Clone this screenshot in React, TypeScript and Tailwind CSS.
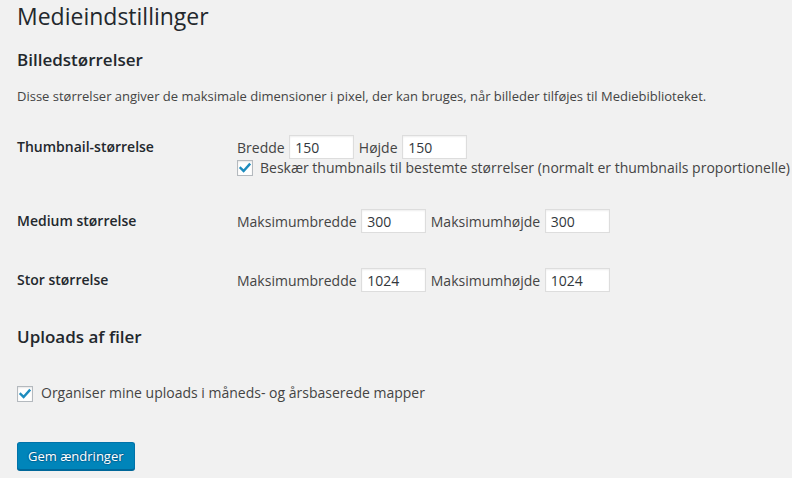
import React from 'react';

// Media settings screen (WordPress admin look)

function Checkbox({ className }: { className?: string }) {
  return (
    <span
      className={`flex h-4 w-4 shrink-0 items-center justify-center border border-[#b4b9be] bg-white shadow-[inset_0_1px_2px_rgba(0,0,0,0.1)] ${className ?? ''}`}
    >
      <svg viewBox="0 0 16 16" className="block h-4 w-4">
        <path
          d="M3 8 L6.4 11.4 L13 4"
          fill="none"
          stroke="#1e8cbe"
          strokeWidth="2.8"
          strokeLinecap="square"
        />
      </svg>
    </span>
  );
}

function NumInput({ value }: { value: string }) {
  return (
    <input
      type="text"
      defaultValue={value}
      className="mx-px h-6 w-[65px] border border-[#ddd] bg-white px-[5px] text-[14px] leading-[18px] text-[#32373c] shadow-[inset_0_1px_2px_rgba(0,0,0,0.07)] outline-none"
    />
  );
}

function SizeRow({
  label,
  wLabel,
  hLabel,
  w,
  h,
  className,
  children,
}: {
  label: string;
  wLabel: string;
  hLabel: string;
  w: string;
  h: string;
  className?: string;
  children?: React.ReactNode;
}) {
  return (
    <div className={`flex ${className ?? ''}`}>
      <div className="w-[220px] shrink-0 text-[14px] font-semibold leading-6 text-[#23282d]">{label}</div>
      <div className="flex flex-col">
        <div className="flex h-6 items-center whitespace-nowrap text-[14px]">
          <span>{wLabel}</span>
          <span className="w-[3.6px]" />
          <NumInput value={w} />
          <span className="w-[3.6px]" />
          <span>{hLabel}</span>
          <span className="w-[3.6px]" />
          <NumInput value={h} />
        </div>
        {children}
      </div>
    </div>
  );
}

export default function App() {
  return (
    <div className="min-h-screen w-full overflow-hidden bg-[#f1f1f1] pl-[17px] font-['Open_Sans',sans-serif] text-[13px] text-[#444]">
      <h1 className="mt-[2px] text-[23px] font-normal leading-[29px] text-[#23282d]">Medieindstillinger</h1>

      <h2 className="mt-[17px] text-[17px] font-semibold leading-6 text-[#23282d]">Billedstørrelser</h2>
      <p className="mt-[14px] leading-5">
        Disse størrelser angiver de maksimale dimensioner i pixel, der kan bruges, når billeder tilføjes til Mediebiblioteket.
      </p>

      <SizeRow className="mt-[29px]" label="Thumbnail-størrelse" wLabel="Bredde" hLabel="Højde" w="150" h="150">
        <div className="flex h-[18px] items-start whitespace-nowrap text-[14px] leading-[18px]">
          <Checkbox className="mt-px" />
          <span className="ml-[7px]">Beskær thumbnails til bestemte størrelser (normalt er thumbnails proportionelle)</span>
        </div>
      </SizeRow>

      <SizeRow className="mt-8" label="Medium størrelse" wLabel="Maksimumbredde" hLabel="Maksimumhøjde" w="300" h="300" />

      <SizeRow className="mt-[35px]" label="Stor størrelse" wLabel="Maksimumbredde" hLabel="Maksimumhøjde" w="1024" h="1024" />

      <h2 className="mt-[33px] text-[17px] font-semibold leading-6 text-[#23282d]">Uploads af filer</h2>

      <div className="mt-[35px] flex h-[18px] items-start text-[14px] leading-[18px]">
        <Checkbox className="mt-[2px]" />
        <span className="ml-[8px]">Organiser mine uploads i måneds- og årsbaserede mapper</span>
      </div>

      <button
        type="button"
        className="mt-[40px] block h-7 rounded-[3px] border border-[#0073aa] border-b-[#006799] bg-[#0085ba] px-[10px] pb-px text-[13px] leading-[26px] text-white shadow-[0_1px_0_#006799] [text-shadow:0_-1px_1px_#006799,1px_0_1px_#006799,0_1px_1px_#006799,-1px_0_1px_#006799]"
      >
        Gem ændringer
      </button>
    </div>
  );
}
